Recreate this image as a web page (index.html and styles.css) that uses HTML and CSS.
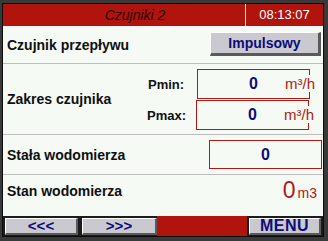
FILE: index.html
```html
<!DOCTYPE html>
<html lang="pl">
<head>
    <meta charset="UTF-8">
    <meta name="viewport" content="width=device-width, initial-scale=1.0">
    <title>Czujniki 2</title>
    <link rel="stylesheet" href="styles.css">
</head>
<body>
    <div class="panel">
        <div class="header">
            <div class="header__title">Czujniki 2</div>
            <div class="header__time">08:13:07</div>
        </div>
        <div class="row row--sensor">
            <span class="label">Czujnik przepływu</span>
            <div class="button button--mode">Impulsowy</div>
        </div>
        <div class="row row--range">
            <span class="label">Zakres czujnika</span>
            <div class="range">
                <div class="range__line">
                    <span class="sublabel">Pmin:</span>
                    <div class="field field--range">
                        <span class="field__value">0</span>
                        <span class="field__unit">m³/h</span>
                    </div>
                </div>
                <div class="range__line range__line--max">
                    <span class="sublabel">Pmax:</span>
                    <div class="field field--range">
                        <span class="field__value">0</span>
                        <span class="field__unit">m³/h</span>
                    </div>
                </div>
            </div>
        </div>
        <div class="row row--const">
            <span class="label">Stała wodomierza</span>
            <div class="field field--const">
                <span class="field__value">0</span>
            </div>
        </div>
        <div class="row row--state">
            <span class="label">Stan wodomierza</span>
            <div class="reading">
                <span class="reading__value">0</span>
                <span class="reading__unit">m3</span>
            </div>
        </div>
        <div class="footer">
            <div class="button button--nav button--prev">&lt;&lt;&lt;</div>
            <div class="button button--nav button--next">&gt;&gt;&gt;</div>
            <div class="footer__fill"></div>
            <div class="button button--nav button--menu">MENU</div>
        </div>
    </div>
</body>
</html>
```

FILE: styles.css
```css
html, body {
    margin: 0;
    padding: 0;
}
body {
    width: 328px;
    height: 241px;
    background: #393939;
    font-family: "Liberation Sans", Arial, sans-serif;
    overflow: hidden;
}
.panel {
    margin: 3px 4px 4px 2px;
    width: 320px;
    height: 232px;
    border: 1px solid #0c0c0c;
    background: #f5faf5;
    display: flex;
    flex-direction: column;
}
.header {
    height: 22px;
    display: flex;
    background: #b0140c;
}
.header__title {
    width: 220px;
    padding-left: 22px;
    border-right: 1px solid #f0e0dc;
    text-align: center;
    font-size: 14px;
    font-style: italic;
    line-height: 22px;
    color: #2a0606;
}
.header__time {
    flex: 1;
    text-align: center;
    font-size: 13px;
    line-height: 22px;
    color: #ffffff;
}
.row {
    display: flex;
    align-items: center;
    padding-left: 4px;
    border-bottom: 1px solid #bdbdbd;
}
.label {
    font-size: 14px;
    font-weight: bold;
    color: #101010;
}
.row--sensor {
    height: 37px;
}
.button {
    box-sizing: border-box;
    background: #c9c9cf;
    border-top: 1px solid #ffffff;
    border-left: 1px solid #ffffff;
    border-right: 2px solid #5a5a5a;
    border-bottom: 2px solid #5a5a5a;
    text-align: center;
    color: #0c0c78;
    font-weight: bold;
}
.button--mode {
    margin-left: auto;
    margin-right: 2px;
    margin-top: -2px;
    width: 111px;
    height: 24px;
    font-size: 14px;
    line-height: 21px;
    border-right-width: 3px;
    border-bottom-width: 3px;
}
.row--range {
    height: 70px;
}
.range {
    margin-left: auto;
    margin-right: 13px;
    display: flex;
    flex-direction: column;
    gap: 1px;
    margin-top: 1px;
}
.range__line {
    display: flex;
    align-items: center;
}
.range__line--max {
    margin-left: -1px;
}
.sublabel {
    width: 49px;
    font-size: 13px;
    font-weight: bold;
    color: #101010;
}
.field {
    position: relative;
    box-sizing: border-box;
    border: 1px solid #b01a14;
    text-align: center;
}
.field--range {
    width: 113px;
    height: 30px;
}
.field__value {
    font-size: 16px;
    font-weight: bold;
    line-height: 28px;
    color: #0c0c78;
}
.field__unit {
    position: absolute;
    right: -7px;
    top: 5px;
    padding: 1px 1px;
    background: #f5faf5;
    font-size: 15px;
    line-height: 15px;
    color: #b01a14;
}
.row--const {
    height: 39px;
    padding-right: 1px;
}
.field--const {
    margin-left: auto;
    width: 113px;
    height: 29px;
}
.field--const .field__value {
    line-height: 27px;
}
.row--state {
    height: 41px;
    border-bottom: none;
    padding-right: 6px;
    padding-bottom: 10px;
    box-sizing: border-box;
}
.reading {
    margin-left: auto;
    display: flex;
    align-items: baseline;
    gap: 2px;
    color: #b01a14;
}
.reading__value {
    font-size: 23px;
}
.reading__unit {
    font-size: 14px;
}
.footer {
    height: 20px;
    display: flex;
    align-items: flex-start;
    background: #1c1c1c;
    padding: 0 2px;
}
.button--nav {
    margin-top: 2px;
    height: 17px;
    font-size: 15px;
    line-height: 14px;
}
.button--prev {
    width: 73px;
}
.button--next {
    width: 75px;
    margin-left: 4px;
}
.footer__fill {
    flex: 1;
    height: 20px;
    margin-right: 2px;
    background: #b0140c;
}
.button--menu {
    width: 72px;
    font-size: 16px;
    letter-spacing: 0.5px;
}
```
